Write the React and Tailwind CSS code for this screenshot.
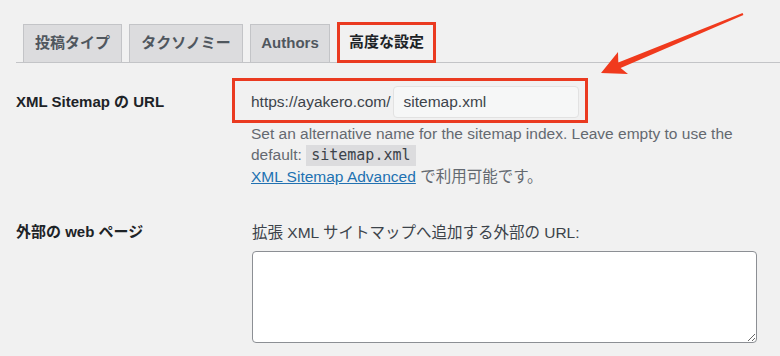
import React from 'react';

const tabs = [
  { label: '投稿タイプ', w: 'w-[99px]' },
  { label: 'タクソノミー', w: 'w-[114px]' },
  { label: 'Authors', w: 'w-[80px]' },
];

const font = { fontFamily: '"Liberation Sans", "Noto Sans CJK JP", sans-serif' };

const App = () => {
  return (
    <div className="relative min-h-screen w-[780px] h-[356px] overflow-hidden bg-[#f1f1f1] pl-4 pt-[22px] text-[15px] text-[#3c434a]" style={font}>
      {/* tabs */}
      <div className="flex items-end gap-[7px] border-b border-[#c3c4c7] pl-[7px]">
        {tabs.map((t) => (
          <div
            key={t.label}
            className={`${t.w} h-[38px] flex items-center justify-center border border-b-0 border-[#c3c4c7] bg-[#dcdcde] font-bold text-[#50575e]`}
          >
            {t.label}
          </div>
        ))}
        <div className="w-[99px] h-[41px] -mb-px flex items-center justify-center border-[3px] border-[#ea3a20] bg-[#f1f1f1] font-bold text-[#1d2327]">
          高度な設定
        </div>
      </div>

      {/* sitemap url row */}
      <div className="flex mt-[15px] text-[15.5px]">
        <div className="w-[216px] pt-[13px] font-bold text-[#1d2327] text-[15px]">XML Sitemap の URL</div>
        <div>
          <div className="flex items-center w-[356px] h-[45px] border-[3px] border-[#ea3a20] pl-4 pr-[6px] pt-[2px]">
            <span className="mr-[2px]">https://ayakero.com/</span>
            <div className="flex-1 h-[32px] flex items-center rounded bg-[#f6f7f7] border border-[#e2e2e2] px-[10px]">
              sitemap.xml
            </div>
          </div>
          <div className="pl-[19px] pt-[1px] w-[530px] leading-[20px] text-[#646970]">
            <p>Set an alternative name for the sitemap index. Leave empty to use the</p>
            <p className="mt-[1px]">
              default:{' '}
              <code className="inline-block bg-[#dcdcde] px-[5px] leading-[21px] text-[#3c434a]" style={{ fontFamily: '"DejaVu Sans Mono", monospace', fontSize: '15px' }}>
                sitemap.xml
              </code>
            </p>
            <p className="mt-[1px]">
              <a href="#" className="text-[#2271b1] underline">XML Sitemap Advanced</a> で利用可能です。
            </p>
          </div>
        </div>
      </div>

      {/* external pages row */}
      <div className="flex mt-[34px]">
        <div className="w-[236px] font-bold text-[#1d2327]">外部の web ページ</div>
        <div>
          <p className="text-[15.5px]">拡張 XML サイトマップへ追加する外部の URL:</p>
          <textarea
            className="mt-[7px] block w-[505px] h-[92px] rounded border border-[#8c8f94] bg-white"
            readOnly
          />
        </div>
      </div>

      {/* annotation arrow */}
      <svg className="absolute left-0 top-0 pointer-events-none" width="780" height="356">
        <polygon
          points="601,73 618,52 618.3,62.5 742.6,13.1 743.4,14.9 620.6,68.1 628,74"
          fill="#f03a1d"
        />
      </svg>
    </div>
  );
};

export default App;
